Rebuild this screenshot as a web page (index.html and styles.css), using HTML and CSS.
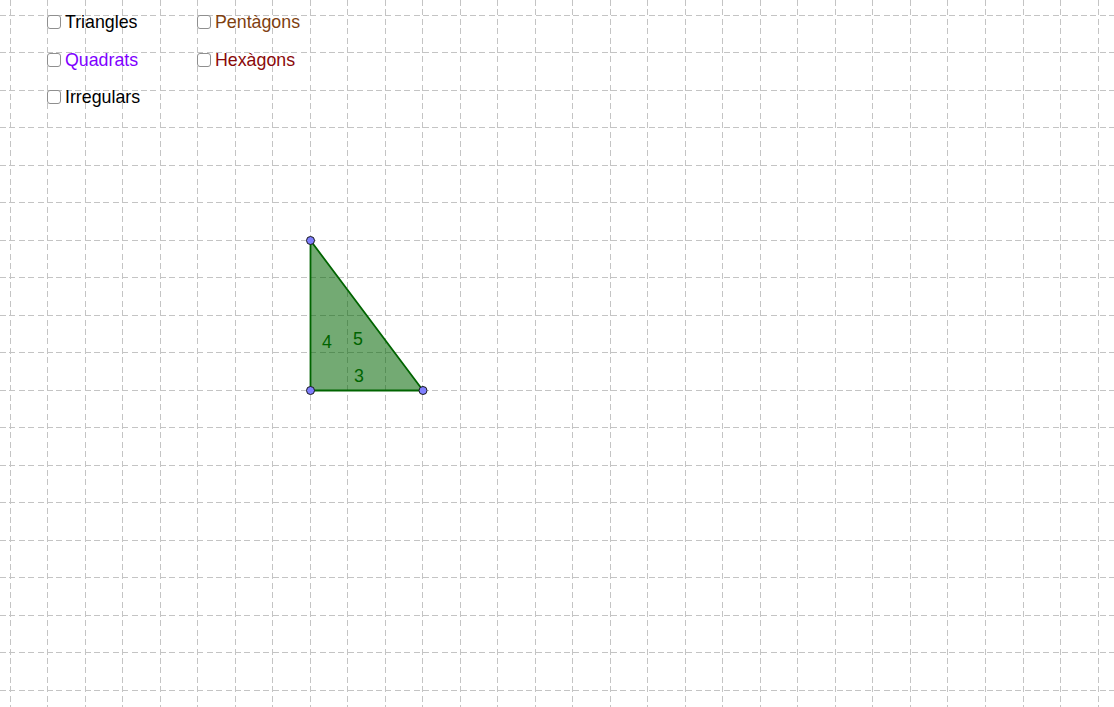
FILE: index.html
```html
<!DOCTYPE html>
<html>
<head>
<meta charset="utf-8">
<link rel="stylesheet" href="styles.css">
</head>
<body>
<div class="applet">
  <svg class="canvas" width="1114" height="707" viewBox="0 0 1114 707">
    <g class="grid">
      <line x1="10.5" y1="0" x2="10.5" y2="707"/>
      <line x1="47.5" y1="0" x2="47.5" y2="707"/>
      <line x1="85.5" y1="0" x2="85.5" y2="707"/>
      <line x1="122.5" y1="0" x2="122.5" y2="707"/>
      <line x1="160.5" y1="0" x2="160.5" y2="707"/>
      <line x1="197.5" y1="0" x2="197.5" y2="707"/>
      <line x1="235.5" y1="0" x2="235.5" y2="707"/>
      <line x1="272.5" y1="0" x2="272.5" y2="707"/>
      <line x1="310.5" y1="0" x2="310.5" y2="707"/>
      <line x1="347.5" y1="0" x2="347.5" y2="707"/>
      <line x1="385.5" y1="0" x2="385.5" y2="707"/>
      <line x1="422.5" y1="0" x2="422.5" y2="707"/>
      <line x1="460.5" y1="0" x2="460.5" y2="707"/>
      <line x1="497.5" y1="0" x2="497.5" y2="707"/>
      <line x1="535.5" y1="0" x2="535.5" y2="707"/>
      <line x1="572.5" y1="0" x2="572.5" y2="707"/>
      <line x1="610.5" y1="0" x2="610.5" y2="707"/>
      <line x1="647.5" y1="0" x2="647.5" y2="707"/>
      <line x1="685.5" y1="0" x2="685.5" y2="707"/>
      <line x1="722.5" y1="0" x2="722.5" y2="707"/>
      <line x1="760.5" y1="0" x2="760.5" y2="707"/>
      <line x1="797.5" y1="0" x2="797.5" y2="707"/>
      <line x1="835.5" y1="0" x2="835.5" y2="707"/>
      <line x1="872.5" y1="0" x2="872.5" y2="707"/>
      <line x1="910.5" y1="0" x2="910.5" y2="707"/>
      <line x1="947.5" y1="0" x2="947.5" y2="707"/>
      <line x1="985.5" y1="0" x2="985.5" y2="707"/>
      <line x1="1023.5" y1="0" x2="1023.5" y2="707"/>
      <line x1="1060.5" y1="0" x2="1060.5" y2="707"/>
      <line x1="1098.5" y1="0" x2="1098.5" y2="707"/>

      <line x1="0" y1="15.5" x2="1114" y2="15.5"/>
      <line x1="0" y1="52.5" x2="1114" y2="52.5"/>
      <line x1="0" y1="90.5" x2="1114" y2="90.5"/>
      <line x1="0" y1="127.5" x2="1114" y2="127.5"/>
      <line x1="0" y1="165.5" x2="1114" y2="165.5"/>
      <line x1="0" y1="202.5" x2="1114" y2="202.5"/>
      <line x1="0" y1="240.5" x2="1114" y2="240.5"/>
      <line x1="0" y1="277.5" x2="1114" y2="277.5"/>
      <line x1="0" y1="315.5" x2="1114" y2="315.5"/>
      <line x1="0" y1="352.5" x2="1114" y2="352.5"/>
      <line x1="0" y1="390.5" x2="1114" y2="390.5"/>
      <line x1="0" y1="427.5" x2="1114" y2="427.5"/>
      <line x1="0" y1="465.5" x2="1114" y2="465.5"/>
      <line x1="0" y1="502.5" x2="1114" y2="502.5"/>
      <line x1="0" y1="540.5" x2="1114" y2="540.5"/>
      <line x1="0" y1="577.5" x2="1114" y2="577.5"/>
      <line x1="0" y1="615.5" x2="1114" y2="615.5"/>
      <line x1="0" y1="652.5" x2="1114" y2="652.5"/>
      <line x1="0" y1="690.5" x2="1114" y2="690.5"/>
    </g>
    <polygon class="tri" points="310.5,240.5 310.5,390.5 423,390.5"/>
    <text class="seg" x="322" y="348">4</text>
    <text class="seg" x="353" y="345">5</text>
    <text class="seg" x="354" y="382">3</text>
    <circle class="pt" cx="310.5" cy="240.5" r="4"/>
    <circle class="pt" cx="310.5" cy="390.5" r="4"/>
    <circle class="pt" cx="423" cy="390.5" r="4"/>
  </svg>

  <div class="controls">
    <label class="check"><span class="box"></span><span class="lbl c-black">Triangles</span></label>
    <label class="check"><span class="box"></span><span class="lbl c-brown">Pentàgons</span></label>
    <label class="check"><span class="box"></span><span class="lbl c-purple">Quadrats</span></label>
    <label class="check"><span class="box"></span><span class="lbl c-red">Hexàgons</span></label>
    <label class="check"><span class="box"></span><span class="lbl c-black">Irregulars</span></label>
  </div>
</div>
</body>
</html>
```

FILE: styles.css
```css
html, body {
  margin: 0;
  padding: 0;
  background: #ffffff;
}

.applet {
  position: relative;
  width: 1114px;
  height: 707px;
  overflow: hidden;
  background: #ffffff;
  font-family: "Liberation Sans", Arial, sans-serif;
}

.canvas {
  position: absolute;
  left: 0;
  top: 0;
  display: block;
}

.grid line {
  stroke: #c4c4c4;
  stroke-width: 1;
  stroke-dasharray: 6 3.4;
  shape-rendering: crispEdges;
}

.tri {
  fill: #006400;
  fill-opacity: 0.55;
  stroke: #006400;
  stroke-width: 1.8;
  stroke-linejoin: round;
}

.seg {
  font-family: "Liberation Sans", Arial, sans-serif;
  font-size: 17.8px;
  fill: #006400;
}

.pt {
  fill: #7f7fff;
  stroke: #1a1a1a;
  stroke-width: 1;
}

.controls {
  position: absolute;
  left: 47px;
  top: 12px;
  display: grid;
  grid-template-columns: 150px 150px;
  grid-auto-rows: 37.5px;
  align-items: start;
}

.check {
  display: flex;
  align-items: center;
  gap: 4px;
  height: 20px;
  cursor: pointer;
}

.box {
  box-sizing: border-box;
  width: 14px;
  height: 14px;
  border: 1.5px solid #8f8f8f;
  border-radius: 3px;
  background: #ffffff;
  flex: none;
}

.lbl {
  font-size: 17.8px;
  line-height: 20px;
  white-space: nowrap;
}

.c-black { color: #000000; }
.c-brown { color: #7f3f10; }
.c-purple { color: #8000ff; }
.c-red { color: #8b0a0a; }
```
